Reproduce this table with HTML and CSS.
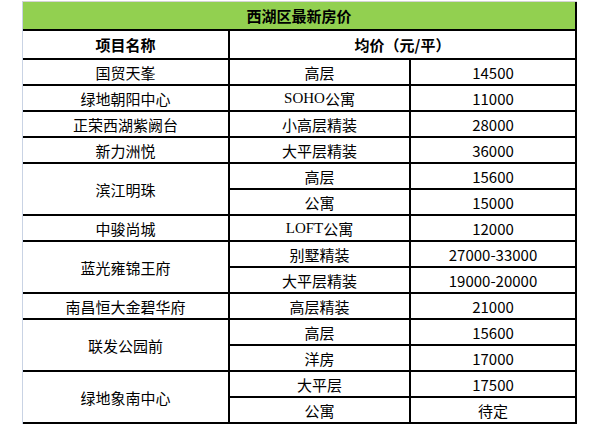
FILE: index.html
```html
<!DOCTYPE html>
<html lang="zh-CN">
<head>
<meta charset="utf-8">
<title>西湖区最新房价</title>
<link rel="stylesheet" href="styles.css">
</head>
<body>
<div class="sheet">
  <div class="cell title">西湖区最新房价</div>
  <div class="cell head">项目名称</div>
  <div class="cell head wide">均价（元/平）</div>

  <div class="cell">国贸天峯</div><div class="cell">高层</div><div class="cell num">14500</div>
  <div class="cell">绿地朝阳中心</div><div class="cell"><span class="lat">SOHO</span>公寓</div><div class="cell num">11000</div>
  <div class="cell">正荣西湖紫阙台</div><div class="cell">小高层精装</div><div class="cell num">28000</div>
  <div class="cell">新力洲悦</div><div class="cell">大平层精装</div><div class="cell num">36000</div>
  <div class="cell tall">滨江明珠</div><div class="cell">高层</div><div class="cell num">15600</div>
  <div class="cell">公寓</div><div class="cell num">15000</div>
  <div class="cell">中骏尚城</div><div class="cell"><span class="lat">LOFT</span>公寓</div><div class="cell num">12000</div>
  <div class="cell tall">蓝光雍锦王府</div><div class="cell">别墅精装</div><div class="cell num">27000-33000</div>
  <div class="cell">大平层精装</div><div class="cell num">19000-20000</div>
  <div class="cell">南昌恒大金碧华府</div><div class="cell">高层精装</div><div class="cell num">21000</div>
  <div class="cell tall">联发公园前</div><div class="cell">高层</div><div class="cell num">15600</div>
  <div class="cell">洋房</div><div class="cell num">17000</div>
  <div class="cell tall">绿地象南中心</div><div class="cell">大平层</div><div class="cell num">17500</div>
  <div class="cell">公寓</div><div class="cell">待定</div>
</div>
</body>
</html>
```

FILE: styles.css
```css
html, body {
  margin: 0;
  padding: 0;
  background: #ffffff;
}

body {
  font-family: "Noto Sans CJK SC", "Noto Sans", sans-serif;
  font-size: 15px;
  color: #000000;
}

.sheet {
  display: grid;
  grid-template-columns: 207px 181px 166px;
  grid-template-rows: 29px 29px repeat(14, 26px);
  width: 554px;
  margin: 1px 0 0 22px;
  border-left: 1px solid #c9d3e4;
  border-top: 1px solid #d4d4d4;
}

.cell {
  box-sizing: border-box;
  display: flex;
  align-items: center;
  justify-content: center;
  border-right: 2px solid #000;
  border-bottom: 2px solid #000;
  white-space: nowrap;
  line-height: 1;
}

.title {
  grid-column: span 3;
  background: #92d050;
  font-weight: bold;
}

.head {
  font-weight: bold;
}

.wide {
  grid-column: span 2;
}

.tall {
  grid-row: span 2;
}

.num {
  font-family: "Noto Sans CJK SC", sans-serif;
}

.lat {
  font-family: "Liberation Serif", serif;
}
```
